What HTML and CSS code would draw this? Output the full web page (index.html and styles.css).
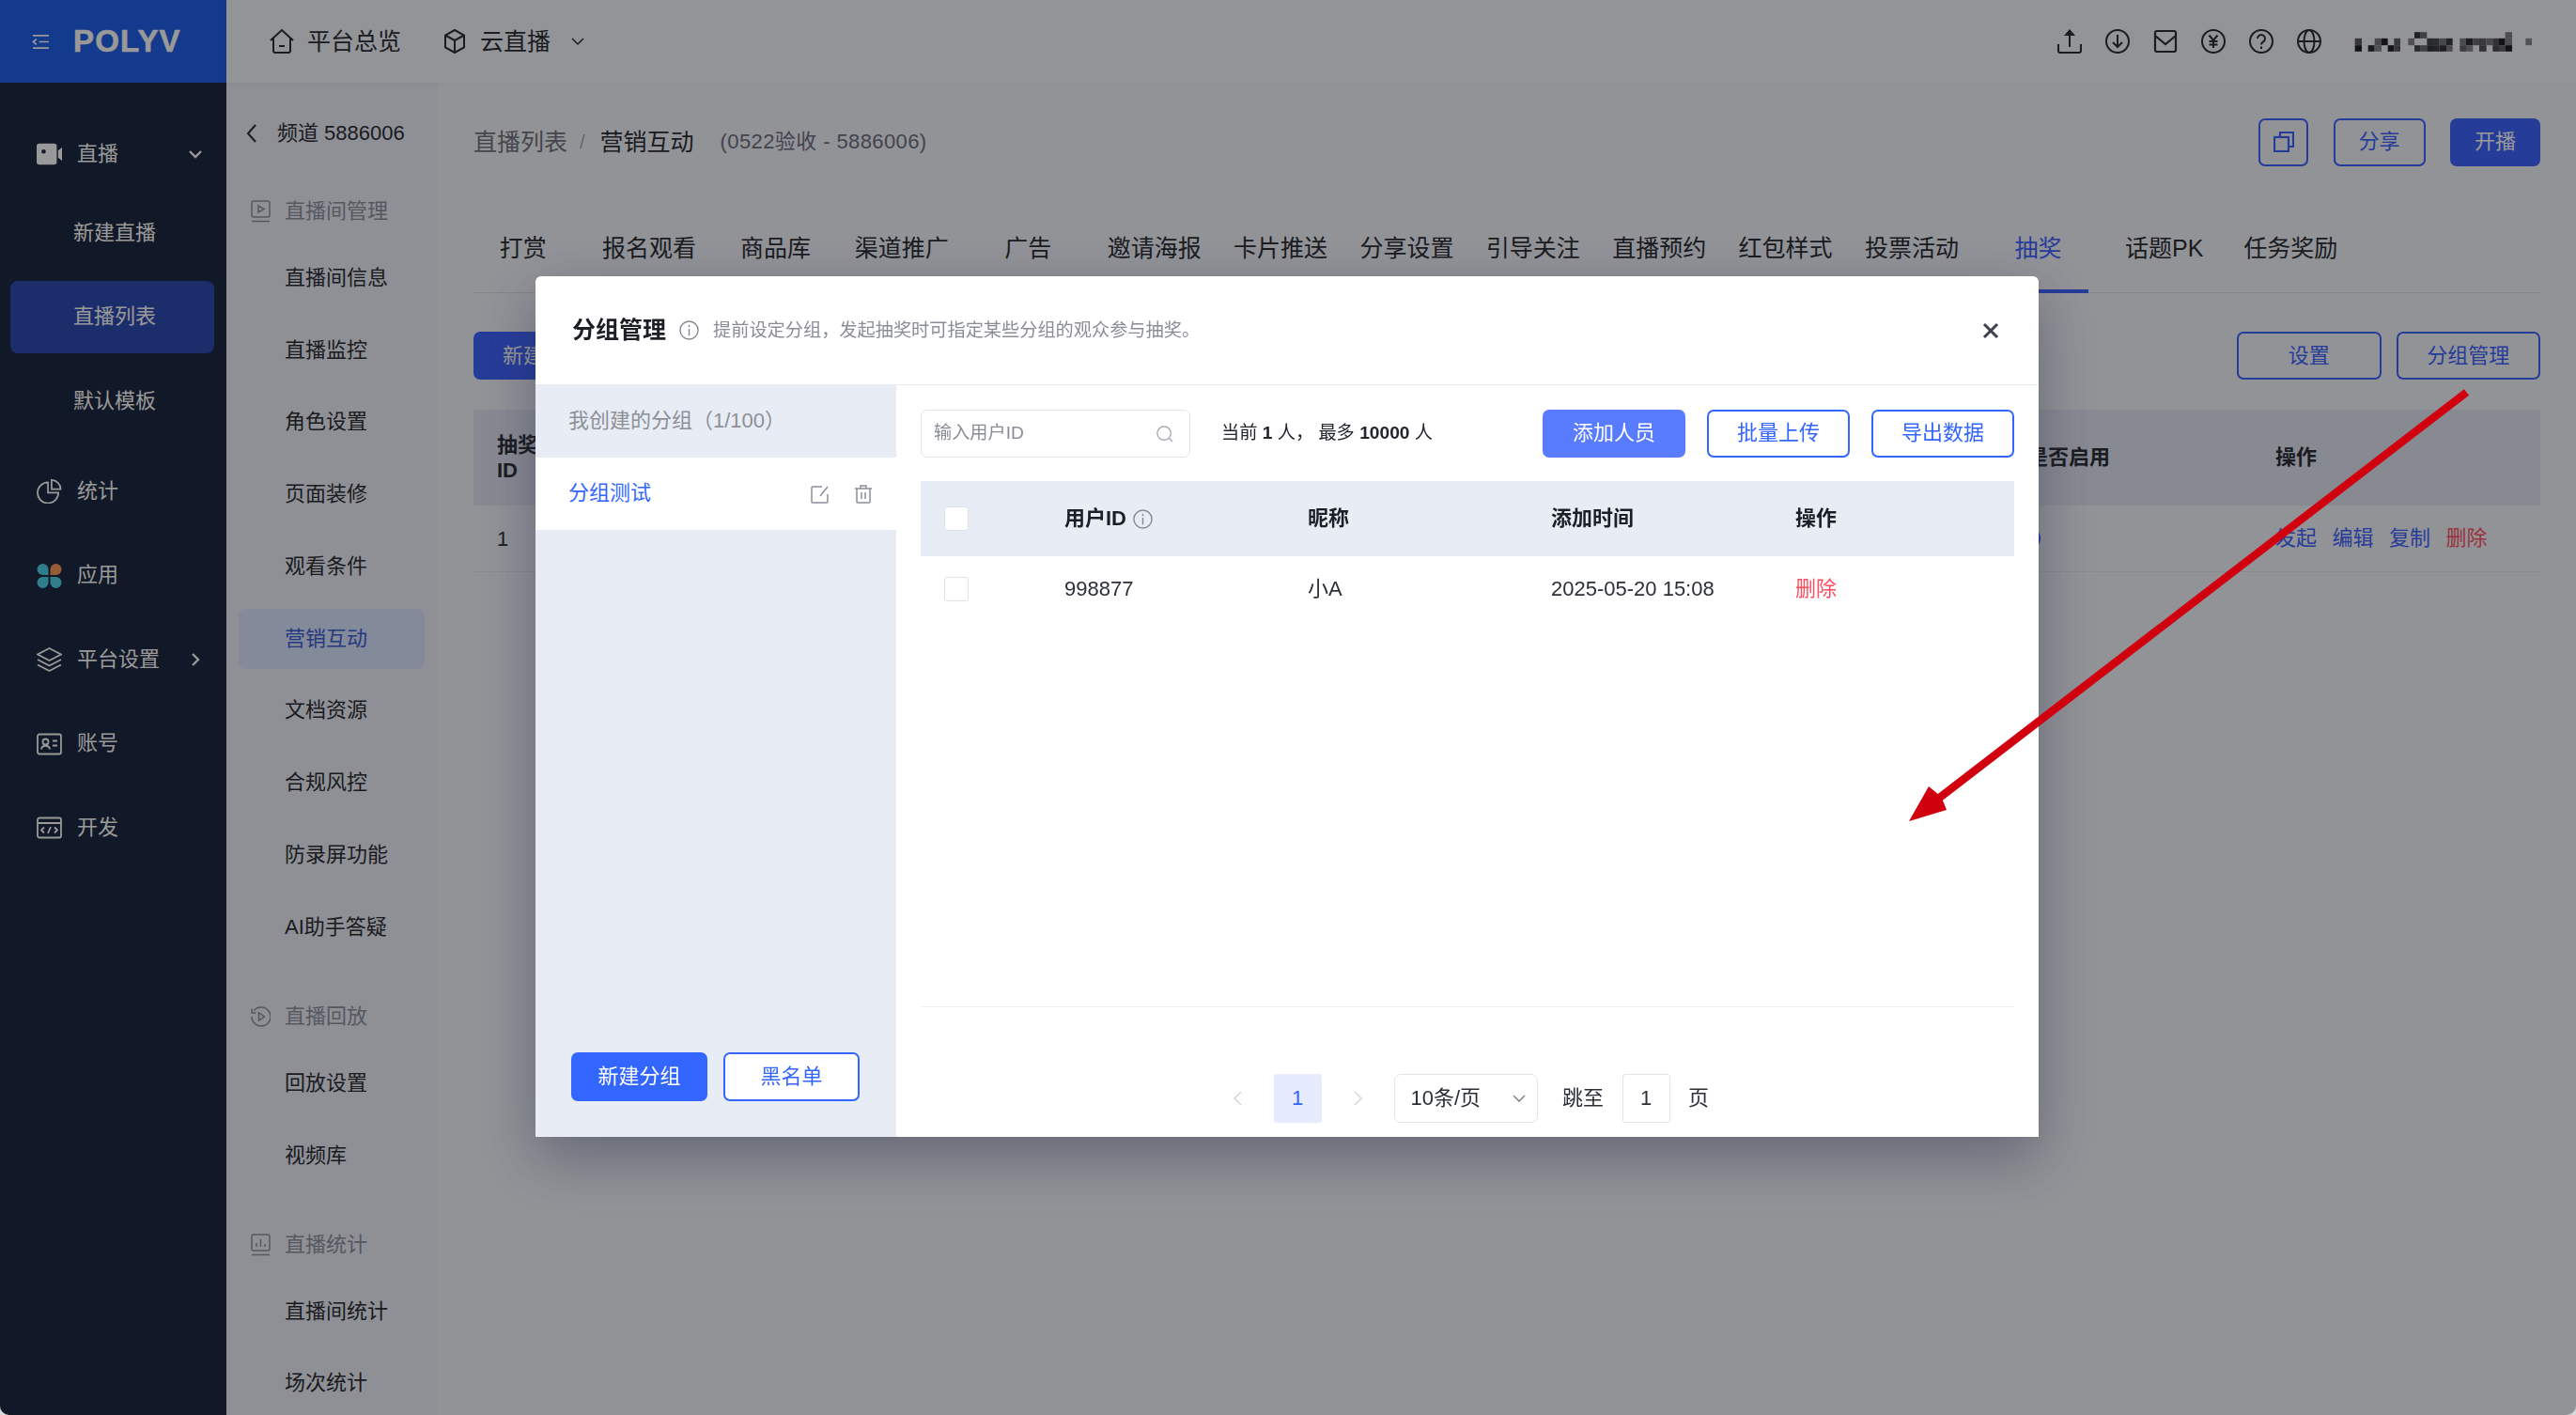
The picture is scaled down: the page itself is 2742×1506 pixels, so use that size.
FILE: index.html
```html
<!DOCTYPE html>
<html lang="zh-CN">
<head>
    <meta charset="UTF-8">
    <title>分组管理</title>
    <link rel="stylesheet" href="styles.css">
</head>
<body>

<div class="app">
    <!-- 左侧主导航 -->
    <aside class="side">
        <div class="logo-bar">
            <svg class="menu-icon" viewBox="0 0 20 18" fill="none" stroke="currentColor" stroke-width="1.8"><path d="M1 2h18M8 9h11M1 16h18M5 6L1.5 9 5 12"/></svg>
            <span class="logo">POLYV</span>
        </div>
        <nav class="nav">
            <div class="nav-row">
                <svg class="nav-icon" viewBox="0 0 29 24" fill="currentColor"><path fill-rule="evenodd" d="M3 0h17a3 3 0 0 1 3 3v18a3 3 0 0 1-3 3H3a3 3 0 0 1-3-3V3a3 3 0 0 1 3-3zm5 6.500a2.500 2.500 0 1 0 0 5 2.500 2.500 0 0 0 0-5z"/><path d="M24.500 8L29 4.500v15L24.500 16z"/></svg>
                <span>直播</span>
                <svg class="nav-arrow" viewBox="0 0 16 16" fill="none" stroke="currentColor" stroke-width="2.400"><path d="M2 5l6 6 6-6"/></svg>
            </div>
            <div class="nav-subs">
                <div class="nav-row sub">新建直播</div>
                <div class="nav-row sub on">直播列表</div>
                <div class="nav-row sub">默认模板</div>
            </div>
            <div class="nav-row">
                <svg class="nav-icon" viewBox="0 0 27 27" fill="none" stroke="currentColor" stroke-width="1.800"><path d="M12 3.500a11.500 11.500 0 1 0 11.500 11.500H12z"/><path d="M16 1a10 10 0 0 1 10 10H16z"/></svg>
                <span>统计</span>
            </div>
            <div class="nav-row">
                <svg class="nav-icon" viewBox="0 0 26 26"><path fill="#4fd2ea" d="M6 0a6 6 0 0 1 6 6v6H6A6 6 0 0 1 6 0zM6 14h6v6a6 6 0 1 1-6-6zM14 14h6a6 6 0 1 1-6 6z"/><path fill="#fa9a5a" d="M20 0a6 6 0 0 1 0 12h-6V6a6 6 0 0 1 6-6z"/></svg>
                <span>应用</span>
            </div>
            <div class="nav-row">
                <svg class="nav-icon" viewBox="0 0 27 26" fill="none" stroke="currentColor" stroke-width="1.800"><path d="M13.500 1L26 7.500 13.500 14 1 7.500z"/><path d="M1 13l12.500 6.500L26 13M1 18.500L13.500 25 26 18.500"/></svg>
                <span>平台设置</span>
                <svg class="nav-arrow" viewBox="0 0 16 16" fill="none" stroke="currentColor" stroke-width="2.400"><path d="M5 2l6 6-6 6"/></svg>
            </div>
            <div class="nav-row">
                <svg class="nav-icon" viewBox="0 0 27 23" fill="none" stroke="currentColor" stroke-width="1.800"><rect x="1" y="1" width="25" height="21" rx="2"/><circle cx="9.500" cy="9" r="3"/><path d="M5 17c.5-5 8.500-5 9 0M17 8h5M17 13h5"/></svg>
                <span>账号</span>
            </div>
            <div class="nav-row">
                <svg class="nav-icon" viewBox="0 0 27 23" fill="none" stroke="currentColor" stroke-width="1.800"><rect x="1" y="1" width="25" height="21" rx="2"/><path d="M1 6.500h25M8 11l-3 3 3 3M19 11l3 3-3 3M15 10.500l-3 7"/></svg>
                <span>开发</span>
            </div>
        </nav>
    </aside>

    <div class="right">
        <!-- 顶栏 -->
        <header class="topbar">
            <div class="top-link">
                <svg class="top-icon" viewBox="0 0 26 28" fill="none" stroke="currentColor" stroke-width="2"><path d="M1 13L13 2l12 11M4 11v13a2 2 0 0 0 2 2h14a2 2 0 0 0 2-2V11M10 19h6"/></svg>
                平台总览
            </div>
            <div class="top-link">
                <svg class="top-icon" viewBox="0 0 24 28" fill="none" stroke="currentColor" stroke-width="2"><path d="M12 2l10 5.500v13L12 26 2 20.500v-13zM2 7.500L12 13l10-5.500M12 13v13"/></svg>
                云直播
                <svg class="top-arrow" viewBox="0 0 14 14" fill="none" stroke="currentColor" stroke-width="1.500"><path d="M1 4l6 6 6-6"/></svg>
            </div>
            <div class="top-tools">
                <svg viewBox="0 0 26 28" fill="none" stroke="currentColor" stroke-width="2"><path d="M1 17v7a2 2 0 0 0 2 2h20a2 2 0 0 0 2-2v-7M13 20V4"/><path d="M13 1l6 7H7z" fill="currentColor" stroke="none"/></svg>
                <svg viewBox="0 0 26 28" fill="none" stroke="currentColor" stroke-width="2"><circle cx="13" cy="14" r="12"/><path d="M13 7v13M8 15l5 5 5-5"/></svg>
                <svg viewBox="0 0 26 28" fill="none" stroke="currentColor" stroke-width="2.200"><rect x="2" y="3" width="22" height="22" rx="2"/><path d="M2 8l11 9 11-9"/></svg>
                <svg viewBox="0 0 26 28" fill="none" stroke="currentColor" stroke-width="2"><circle cx="13" cy="14" r="12"/><path d="M8.500 7.500L13 13l4.500-5.500M13 13v8M8.500 14h9M8.500 17.500h9"/></svg>
                <svg viewBox="0 0 26 28" fill="none" stroke="currentColor" stroke-width="2"><circle cx="13" cy="14" r="12"/><path d="M9 11a4 4 0 1 1 6 3.500c-1.500.8-2 1.500-2 3M13 19.500v2.500"/></svg>
                <svg viewBox="0 0 26 28" fill="none" stroke="currentColor" stroke-width="2"><circle cx="13" cy="14" r="12"/><ellipse cx="13" cy="14" rx="5.500" ry="12"/><path d="M1 14h24"/></svg>
                <svg class="mosaic" viewBox="0 0 660 62">
                    <rect x="240" y="0" width="20" height="20" fill="#37383e"/><rect x="260" y="0" width="20" height="20" fill="#6c6d73"/><rect x="530" y="0" width="22" height="20" fill="#808186"/>
                    <rect x="50" y="20" width="22" height="22" fill="#5c5d63"/><rect x="113" y="20" width="22" height="22" fill="#77787e"/><rect x="135" y="20" width="20" height="22" fill="#25262c"/><rect x="175" y="20" width="20" height="22" fill="#5e5f65"/><rect x="220" y="20" width="20" height="22" fill="#85868a"/><rect x="280" y="20" width="20" height="22" fill="#45464c"/><rect x="300" y="20" width="20" height="22" fill="#4a4b51"/><rect x="320" y="20" width="22" height="22" fill="#77787e"/><rect x="342" y="20" width="20" height="22" fill="#3a3b41"/><rect x="385" y="20" width="20" height="22" fill="#7c7d83"/><rect x="405" y="20" width="22" height="22" fill="#2d2e34"/><rect x="427" y="20" width="20" height="22" fill="#6a6b71"/><rect x="447" y="20" width="23" height="22" fill="#5f6066"/><rect x="470" y="20" width="20" height="22" fill="#7a7b81"/><rect x="490" y="20" width="20" height="22" fill="#55565c"/><rect x="510" y="20" width="20" height="22" fill="#202127"/><rect x="530" y="20" width="22" height="22" fill="#808186"/><rect x="595" y="20" width="20" height="22" fill="#88898e"/>
                    <rect x="50" y="42" width="22" height="20" fill="#1d1e24"/><rect x="92" y="42" width="21" height="20" fill="#2b2c32"/><rect x="113" y="42" width="22" height="20" fill="#88898e"/><rect x="155" y="42" width="20" height="20" fill="#232429"/><rect x="175" y="42" width="20" height="20" fill="#5a5b61"/><rect x="240" y="42" width="20" height="20" fill="#45464c"/><rect x="260" y="42" width="20" height="20" fill="#6a6b71"/><rect x="280" y="42" width="20" height="20" fill="#33343a"/><rect x="300" y="42" width="20" height="20" fill="#3c3d43"/><rect x="320" y="42" width="22" height="20" fill="#34353b"/><rect x="342" y="42" width="20" height="20" fill="#7c7d83"/><rect x="385" y="42" width="20" height="20" fill="#66676d"/><rect x="405" y="42" width="22" height="20" fill="#85868a"/><rect x="447" y="42" width="23" height="20" fill="#55565c"/><rect x="490" y="42" width="20" height="20" fill="#4a4b51"/><rect x="510" y="42" width="20" height="20" fill="#606167"/><rect x="530" y="42" width="22" height="20" fill="#202127"/>
                </svg>
            </div>
        </header>

        <div class="body">
            <!-- 频道子菜单 -->
            <aside class="sub-side">
                <div class="back">
                    <svg viewBox="0 0 12 22" fill="none" stroke="currentColor" stroke-width="2"><path d="M10 2L2 11l8 9"/></svg>
                    频道 5886006
                </div>
                <div class="group">
                    <div class="group-title">
                        <svg viewBox="0 0 21 24" fill="none" stroke="currentColor" stroke-width="1.500"><rect x="1" y="1" width="19" height="17" rx="2"/><path d="M8 6v7l6-3.500zM1 22.500h19"/></svg>
                        直播间管理
                    </div>
                    <div class="sub-item">直播间信息</div>
                    <div class="sub-item">直播监控</div>
                    <div class="sub-item">角色设置</div>
                    <div class="sub-item">页面装修</div>
                    <div class="sub-item">观看条件</div>
                    <div class="sub-item on">营销互动</div>
                    <div class="sub-item">文档资源</div>
                    <div class="sub-item">合规风控</div>
                    <div class="sub-item">防录屏功能</div>
                    <div class="sub-item">AI助手答疑</div>
                </div>
                <div class="group">
                    <div class="group-title">
                        <svg viewBox="0 0 21 24" fill="none" stroke="currentColor" stroke-width="1.500"><path d="M3 6a10 10 0 1 1-2 6M1 3.500V8h4.500"/><path d="M8.500 8v8l6-4z"/></svg>
                        直播回放
                    </div>
                    <div class="sub-item">回放设置</div>
                    <div class="sub-item">视频库</div>
                </div>
                <div class="group">
                    <div class="group-title">
                        <svg viewBox="0 0 21 24" fill="none" stroke="currentColor" stroke-width="1.500"><rect x="1" y="1" width="19" height="17" rx="2"/><path d="M6 14v-4M10.500 14V6M15 14v-3M1 22.500h19"/></svg>
                        直播统计
                    </div>
                    <div class="sub-item">直播间统计</div>
                    <div class="sub-item">场次统计</div>
                </div>
            </aside>

            <!-- 抽奖列表 -->
            <main class="content">
                <div class="page-head">
                    <div class="crumbs">
                        <span class="crumb">直播列表</span>
                        <span class="crumb-sep">/</span>
                        <span class="crumb-now">营销互动</span>
                        <span class="crumb-info">(0522验收 - 5886006)</span>
                    </div>
                    <div class="head-btns">
                        <button class="btn line icon-btn"><svg viewBox="0 0 22 22" fill="none" stroke="currentColor" stroke-width="2.200"><rect x="1" y="6" width="15" height="15"/><path d="M7 6V1h14v15h-5"/></svg></button>
                        <button class="btn line share">分享</button>
                        <button class="btn fill start">开播</button>
                    </div>
                </div>
                <div class="tabs">
                    <div class="tab">打赏</div>
                    <div class="tab">报名观看</div>
                    <div class="tab">商品库</div>
                    <div class="tab">渠道推广</div>
                    <div class="tab">广告</div>
                    <div class="tab">邀请海报</div>
                    <div class="tab">卡片推送</div>
                    <div class="tab">分享设置</div>
                    <div class="tab">引导关注</div>
                    <div class="tab">直播预约</div>
                    <div class="tab">红包样式</div>
                    <div class="tab">投票活动</div>
                    <div class="tab on">抽奖</div>
                    <div class="tab">话题PK</div>
                    <div class="tab">任务奖励</div>
                </div>
                <div class="tools">
                    <button class="btn fill new-btn">新建抽奖</button>
                    <button class="btn line tool-btn">设置</button>
                    <button class="btn line tool-btn">分组管理</button>
                </div>
                <div class="lot-row lot-head">
                    <div class="lot-id">抽奖 ID</div>
                    <div>是否启用</div>
                    <div>操作</div>
                </div>
                <div class="lot-row">
                    <div class="lot-id">1</div>
                    <div><span class="switch"></span></div>
                    <div class="ops">
                        <a>发起</a><a>编辑</a><a>复制</a><a class="del">删除</a>
                    </div>
                </div>
            </main>
        </div>
    </div>
</div>

<div class="mask"></div>

<!-- 分组管理弹窗 -->
<section class="modal">
    <div class="modal-head">
        <h2>分组管理</h2>
        <svg class="info" viewBox="0 0 22 22" fill="none" stroke="currentColor" stroke-width="1.500"><circle cx="11" cy="11" r="10"/><path d="M11 9.500V17M11 5v2.500"/></svg>
        <p>提前设定分组，发起抽奖时可指定某些分组的观众参与抽奖。</p>
        <svg class="close" viewBox="0 0 18 18" fill="none" stroke="currentColor" stroke-width="3"><path d="M2 2l14 14M16 2L2 16"/></svg>
    </div>
    <div class="modal-body">
        <div class="groups">
            <div class="groups-title">我创建的分组（1/100）</div>
            <div class="group-item">
                <span>分组测试</span>
                <svg viewBox="0 0 20 20" fill="none" stroke="currentColor" stroke-width="1.500"><path d="M18 10v8a1 1 0 0 1-1 1H2a1 1 0 0 1-1-1V3a1 1 0 0 1 1-1h10M18 2l-8 10"/></svg>
                <svg viewBox="0 0 20 20" fill="none" stroke="currentColor" stroke-width="1.500"><path d="M1 4h18M7 4V1h6v3M3 4v14a1 1 0 0 0 1 1h12a1 1 0 0 0 1-1V4M8 8v7M12 8v7"/></svg>
            </div>
            <div class="groups-btns">
                <button class="btn solid small">新建分组</button>
                <button class="btn outline small">黑名单</button>
            </div>
        </div>
        <div class="members">
            <div class="member-bar">
                <div class="search">
                    <span>输入用户ID</span>
                    <svg viewBox="0 0 20 20" fill="none" stroke="currentColor" stroke-width="1.400"><circle cx="9" cy="9" r="8"/><path d="M15 15l4 4"/></svg>
                </div>
                <div class="count">当前 <b>1</b> 人， 最多 <b>10000</b> 人</div>
                <button class="btn soft big">添加人员</button>
                <button class="btn outline big">批量上传</button>
                <button class="btn outline big">导出数据</button>
            </div>
            <div class="member-table">
                <div class="m-row m-head">
                    <div><span class="check"></span></div>
                    <div class="id-head">用户ID<svg class="info" viewBox="0 0 22 22" fill="none" stroke="currentColor" stroke-width="1.500"><circle cx="11" cy="11" r="10"/><path d="M11 9.500V17M11 5v2.500"/></svg></div>
                    <div>昵称</div>
                    <div>添加时间</div>
                    <div>操作</div>
                </div>
                <div class="m-row">
                    <div><span class="check"></span></div>
                    <div>998877</div>
                    <div>小A</div>
                    <div>2025-05-20 15:08</div>
                    <div class="del">删除</div>
                </div>
            </div>
            <div class="pager">
                <svg class="page-arrow" viewBox="0 0 38 20" fill="none" stroke="currentColor" stroke-width="1.500"><path d="M23 3l-7 7 7 7"/></svg>
                <div class="page-num">1</div>
                <svg class="page-arrow" viewBox="0 0 38 20" fill="none" stroke="currentColor" stroke-width="1.500"><path d="M16 3l7 7-7 7"/></svg>
                <div class="page-size">10条/页
                    <svg viewBox="0 0 14 10" fill="none" stroke="currentColor" stroke-width="1.600"><path d="M1 2l6 6 6-6"/></svg>
                </div>
                <span class="jump">跳至</span>
                <div class="page-input">1</div>
                <span>页</span>
            </div>
        </div>
    </div>
</section>

<!-- 标注箭头 -->
<svg class="arrow" viewBox="0 0 2742 1506"><polygon points="2622.900,414.200 2062.700,845.100 2053,837 2032,874 2072,862 2067.900,851.700 2628.100,420.800"/></svg>

</body>
</html>
```

FILE: styles.css
```css
* {
    box-sizing: border-box;
}
html, body {
    margin: 0;
    height: 100%;
    overflow: hidden;
}
body {
    font-family: "Liberation Sans", "Noto Sans CJK SC", sans-serif;
    font-size: 22px;
    line-height: 1.3;
    color: #2c2f36;
    background: #d8d8d8;
}
button {
    font-family: inherit;
    line-height: 1.3;
}
.app {
    display: flex;
    height: 1506px;
    border-radius: 0 0 10px 10px;
    overflow: hidden;
    isolation: isolate;
}

/* main nav */
.side {
    width: 241px;
    flex-shrink: 0;
    background: #1d2841;
    color: #fff;
}
.logo-bar {
    height: 88px;
    background: #2061e9;
    display: flex;
    align-items: center;
    padding-left: 34px;
}
.menu-icon {
    width: 19px;
    height: 17px;
    margin-right: 25px;
}
.logo {
    font-size: 33px;
    font-weight: 700;
    letter-spacing: 1.200px;
    -webkit-text-stroke: .6px #fff;
}
.nav {
    padding-top: 37.500px;
    display: flex;
    flex-direction: column;
    gap: 12.500px;
}
.nav-subs {
    display: flex;
    flex-direction: column;
    gap: 12.500px;
    margin: -5.500px 0 6.500px;
}
.nav-row {
    height: 77px;
    margin: 0 13px 0 11px;
    padding: 0 12px 0 28px;
    display: flex;
    align-items: center;
    border-radius: 8px;
}
.nav-row.sub {
    padding-left: 67px;
}
.nav-row.on {
    background: #2f4bb2;
}
.nav-icon {
    width: 27px;
    height: 26px;
    margin-right: 16px;
    flex-shrink: 0;
}
.nav-arrow {
    width: 16px;
    height: 16px;
    margin-left: auto;
}

.right {
    flex: 1;
    min-width: 0;
    display: flex;
    flex-direction: column;
}

/* top bar */
.topbar {
    height: 88px;
    flex-shrink: 0;
    background: #f5f7fd;
    display: flex;
    align-items: center;
    padding-left: 46px;
    font-size: 25px;
    box-shadow: 0 2px 6px rgba(0, 0, 0, .04);
    position: relative;
}
.top-link {
    display: flex;
    align-items: center;
    margin-right: 44px;
}
.top-icon {
    width: 26px;
    height: 28px;
    margin-right: 14px;
}
.top-arrow {
    width: 14px;
    height: 14px;
    margin-left: 22px;
}
.top-tools {
    margin-left: auto;
    display: flex;
    align-items: center;
    gap: 25px;
    padding-right: 48px;
}
.top-tools svg {
    width: 26px;
    height: 28px;
}
.top-tools .mosaic {
    width: 220px;
    height: 21px;
    margin-left: -6px;
    margin-right: -16px;
}

.body {
    flex: 1;
    display: flex;
    min-height: 0;
}

/* channel sub menu */
.sub-side {
    width: 224px;
    flex-shrink: 0;
    background: #eef0f8;
}
.back {
    height: 106px;
    display: flex;
    align-items: center;
    padding: 2px 0 0 21px;
    font-size: 22px;
}
.back svg {
    width: 12px;
    height: 22px;
    margin-right: 21px;
}
.group {
    margin-bottom: 32px;
    display: flex;
    flex-direction: column;
    gap: 12.800px;
}
.group-title {
    height: 64px;
    margin-bottom: -6.800px;
    display: flex;
    align-items: center;
    padding: 0 0 2px 26px;
    color: #8f93a0;
}
.group-title svg {
    width: 21px;
    height: 24px;
    margin-right: 15px;
}
.sub-item {
    height: 64px;
    margin: 0 13px;
    padding-left: 49px;
    display: flex;
    align-items: center;
    border-radius: 8px;
}
.sub-item.on {
    background: #dbe6ff;
    color: #3f5fd8;
}

/* page content */
.content {
    flex: 1;
    min-width: 0;
    padding: 0 38px 0 39px;
    background: #f3f5fc;
}
.page-head {
    height: 127px;
    display: flex;
    align-items: center;
    justify-content: space-between;
    padding-bottom: 1px;
}
.crumbs {
    display: flex;
    align-items: center;
    font-size: 25px;
}
.crumb {
    color: #737680;
}
.crumb-sep {
    color: #a9acb5;
    margin: 0 16px 0 13px;
    font-size: 20px;
}
.crumb-info {
    margin-left: 28px;
    font-size: 22px;
    letter-spacing: .4px;
    color: #6e7280;
}
.head-btns {
    display: flex;
    gap: 26.500px;
}
.btn {
    border-radius: 7px;
    font-size: 22px;
    padding: 0;
    display: flex;
    align-items: center;
    justify-content: center;
}
.btn.line {
    height: 51px;
    background: none;
    border: 2px solid #3f64ff;
    color: #3f64ff;
}
.btn.fill {
    height: 51px;
    background: #3f64ff;
    border: none;
    color: #fff;
}
.icon-btn {
    width: 53px;
}
.icon-btn svg {
    width: 22px;
    height: 22px;
}
.share {
    width: 98px;
}
.start {
    width: 96px;
}
.tabs {
    height: 97px;
    margin-left: -14.500px;
    display: flex;
    font-size: 25px;
    position: relative;
}
.tabs::after {
    content: "";
    position: absolute;
    left: 14.500px;
    right: 0;
    bottom: 0;
    height: 1px;
    background: #dcdfe8;
}
.tab {
    width: 134.400px;
    text-align: center;
    padding-top: 33px;
    position: relative;
}
.tab.on {
    color: #3f64ff;
}
.tab.on::after {
    content: "";
    position: absolute;
    left: 14px;
    right: 14px;
    bottom: 0;
    height: 4px;
    background: #3f64ff;
    z-index: 1;
}
.tools {
    height: 124px;
    display: flex;
    gap: 16px;
    padding-top: 41px;
}
.tools .btn {
    padding-top: 1px;
}
.new-btn {
    width: 150px;
    margin-right: auto;
}
.tool-btn {
    width: 153.500px;
}
.lot-row {
    display: grid;
    grid-template-columns: 1654px 264px 1fr;
    align-items: center;
    height: 71px;
    border-bottom: 1px solid #e4e7ef;
}
.lot-head {
    height: 102px;
    background: #e3e6f3;
    border-bottom: none;
    font-weight: 600;
}
.lot-id {
    padding-left: 25px;
    width: 75px;
    line-height: 27px;
}
.switch {
    display: block;
    width: 44px;
    height: 24px;
    margin-left: -30px;
    border-radius: 12px;
    background: #3f64ff;
}
.ops {
    display: flex;
    gap: 16.500px;
    color: #3f64ff;
}
.del {
    color: #ff5468;
}

/* dim layer */
.mask {
    position: fixed;
    inset: 0;
    background: rgba(0, 0, 0, .4);
    border-radius: 0 0 10px 10px;
}

/* dialog */
.modal {
    position: fixed;
    left: 570px;
    top: 294px;
    width: 1600px;
    height: 916px;
    background: #fff;
    border-radius: 6px 6px 0 0;
    display: flex;
    flex-direction: column;
    box-shadow: 0 22px 60px rgba(35, 40, 70, .42);
    overflow: hidden;
}
.modal-head {
    height: 116px;
    flex-shrink: 0;
    border-bottom: 1px solid #eaebee;
    display: flex;
    align-items: center;
    padding: 0 42px 0 39px;
}
.modal-head h2 {
    margin: 0;
    font-size: 25px;
    font-weight: 700;
    color: #1c1f26;
}
.info {
    width: 21px;
    height: 21px;
    color: #868a94;
    flex-shrink: 0;
}
.modal-head .info {
    margin-left: 14px;
}
.modal-head p {
    margin: 1px 0 0 15px;
    font-size: 19.200px;
    color: #8a8d96;
}
.close {
    width: 18px;
    height: 18px;
    margin-left: auto;
    color: #3c404a;
}
.modal-body {
    flex: 1;
    display: flex;
    min-height: 0;
}

.groups {
    width: 384px;
    flex-shrink: 0;
    background: #e8ecf4;
    display: flex;
    flex-direction: column;
}
.groups-title {
    height: 77px;
    display: flex;
    align-items: center;
    padding: 0 0 0 35px;
    color: #8d9098;
}
.group-item {
    height: 77px;
    background: #fff;
    display: flex;
    align-items: center;
    padding: 0 25px 0 35px;
    gap: 26px;
    color: #3366ff;
}
.group-item span {
    margin-right: auto;
}
.group-item svg {
    width: 20px;
    height: 20px;
    color: #8b8f99;
}
.groups-btns {
    margin-top: auto;
    padding: 0 39px 38px 38px;
    display: flex;
    justify-content: space-between;
}
.btn.small {
    width: 145px;
    height: 52px;
    padding-top: 1px;
}
.btn.solid {
    background: #3366ff;
    border: none;
    color: #fff;
}
.btn.soft {
    background: #597cff;
    border: none;
    color: #fff;
}
.btn.outline {
    background: #fff;
    border: 2px solid #3366ff;
    color: #3366ff;
}

.members {
    flex: 1;
    min-width: 0;
    padding: 26px 26px 15px 26px;
    display: flex;
    flex-direction: column;
}
.member-bar {
    height: 51px;
    flex-shrink: 0;
    display: flex;
    align-items: center;
    gap: 23px;
}
.search {
    width: 287px;
    height: 51px;
    border: 1.500px solid #e0e3e8;
    border-radius: 7px;
    display: flex;
    align-items: center;
    justify-content: space-between;
    padding: 0 17px 0 13px;
    font-size: 19.200px;
    color: #8a8d96;
}
.search svg {
    width: 18px;
    height: 18px;
    color: #a0a3ab;
}
.count {
    margin-left: 10px;
    margin-right: auto;
    font-size: 19.200px;
    color: #23262d;
}
.btn.big {
    width: 152px;
    height: 51px;
}
.member-table {
    flex: 1;
    margin-top: 25px;
    border-bottom: 1.500px solid #eff0f3;
}
.m-row {
    display: grid;
    grid-template-columns: 153px 259px 259px 260px 1fr;
    align-items: center;
    height: 70px;
    color: #2b2f38;
}
.m-head {
    height: 80px;
    background: #e8ecf4;
    font-weight: 600;
    color: #1c1f26;
}
.m-row .check {
    display: block;
    width: 26px;
    height: 26px;
    margin-left: 25px;
    background: #fff;
    border: 1.500px solid #dfe2e8;
    border-radius: 3px;
}
.m-row .del {
    color: #ff4d5e;
}
.id-head {
    display: flex;
    align-items: center;
    gap: 7px;
}

.pager {
    height: 52px;
    flex-shrink: 0;
    margin-top: 71px;
    padding-left: 318px;
    display: flex;
    align-items: center;
    gap: 19.500px;
    color: #2b2f38;
}
.page-arrow {
    width: 38px;
    height: 20px;
    color: #d5d7dc;
}
.page-num {
    width: 51px;
    height: 52px;
    background: #e6ebfd;
    color: #3366ff;
    border-radius: 3px;
    display: flex;
    align-items: center;
    justify-content: center;
}
.page-size {
    width: 153px;
    height: 52px;
    border: 1.500px solid #e0e3e8;
    border-radius: 7px;
    display: flex;
    align-items: center;
    justify-content: space-between;
    padding: 0 12px 0 17px;
}
.page-size svg {
    width: 14px;
    height: 10px;
    color: #868a94;
}
.jump {
    margin-left: 7px;
}
.page-input {
    width: 51px;
    height: 52px;
    border: 1.500px solid #e0e3e8;
    border-radius: 3px;
    display: flex;
    align-items: center;
    justify-content: center;
}

.arrow {
    position: fixed;
    inset: 0;
    width: 100%;
    height: 100%;
    pointer-events: none;
}
.arrow polygon {
    fill: #d0000f;
}
```
